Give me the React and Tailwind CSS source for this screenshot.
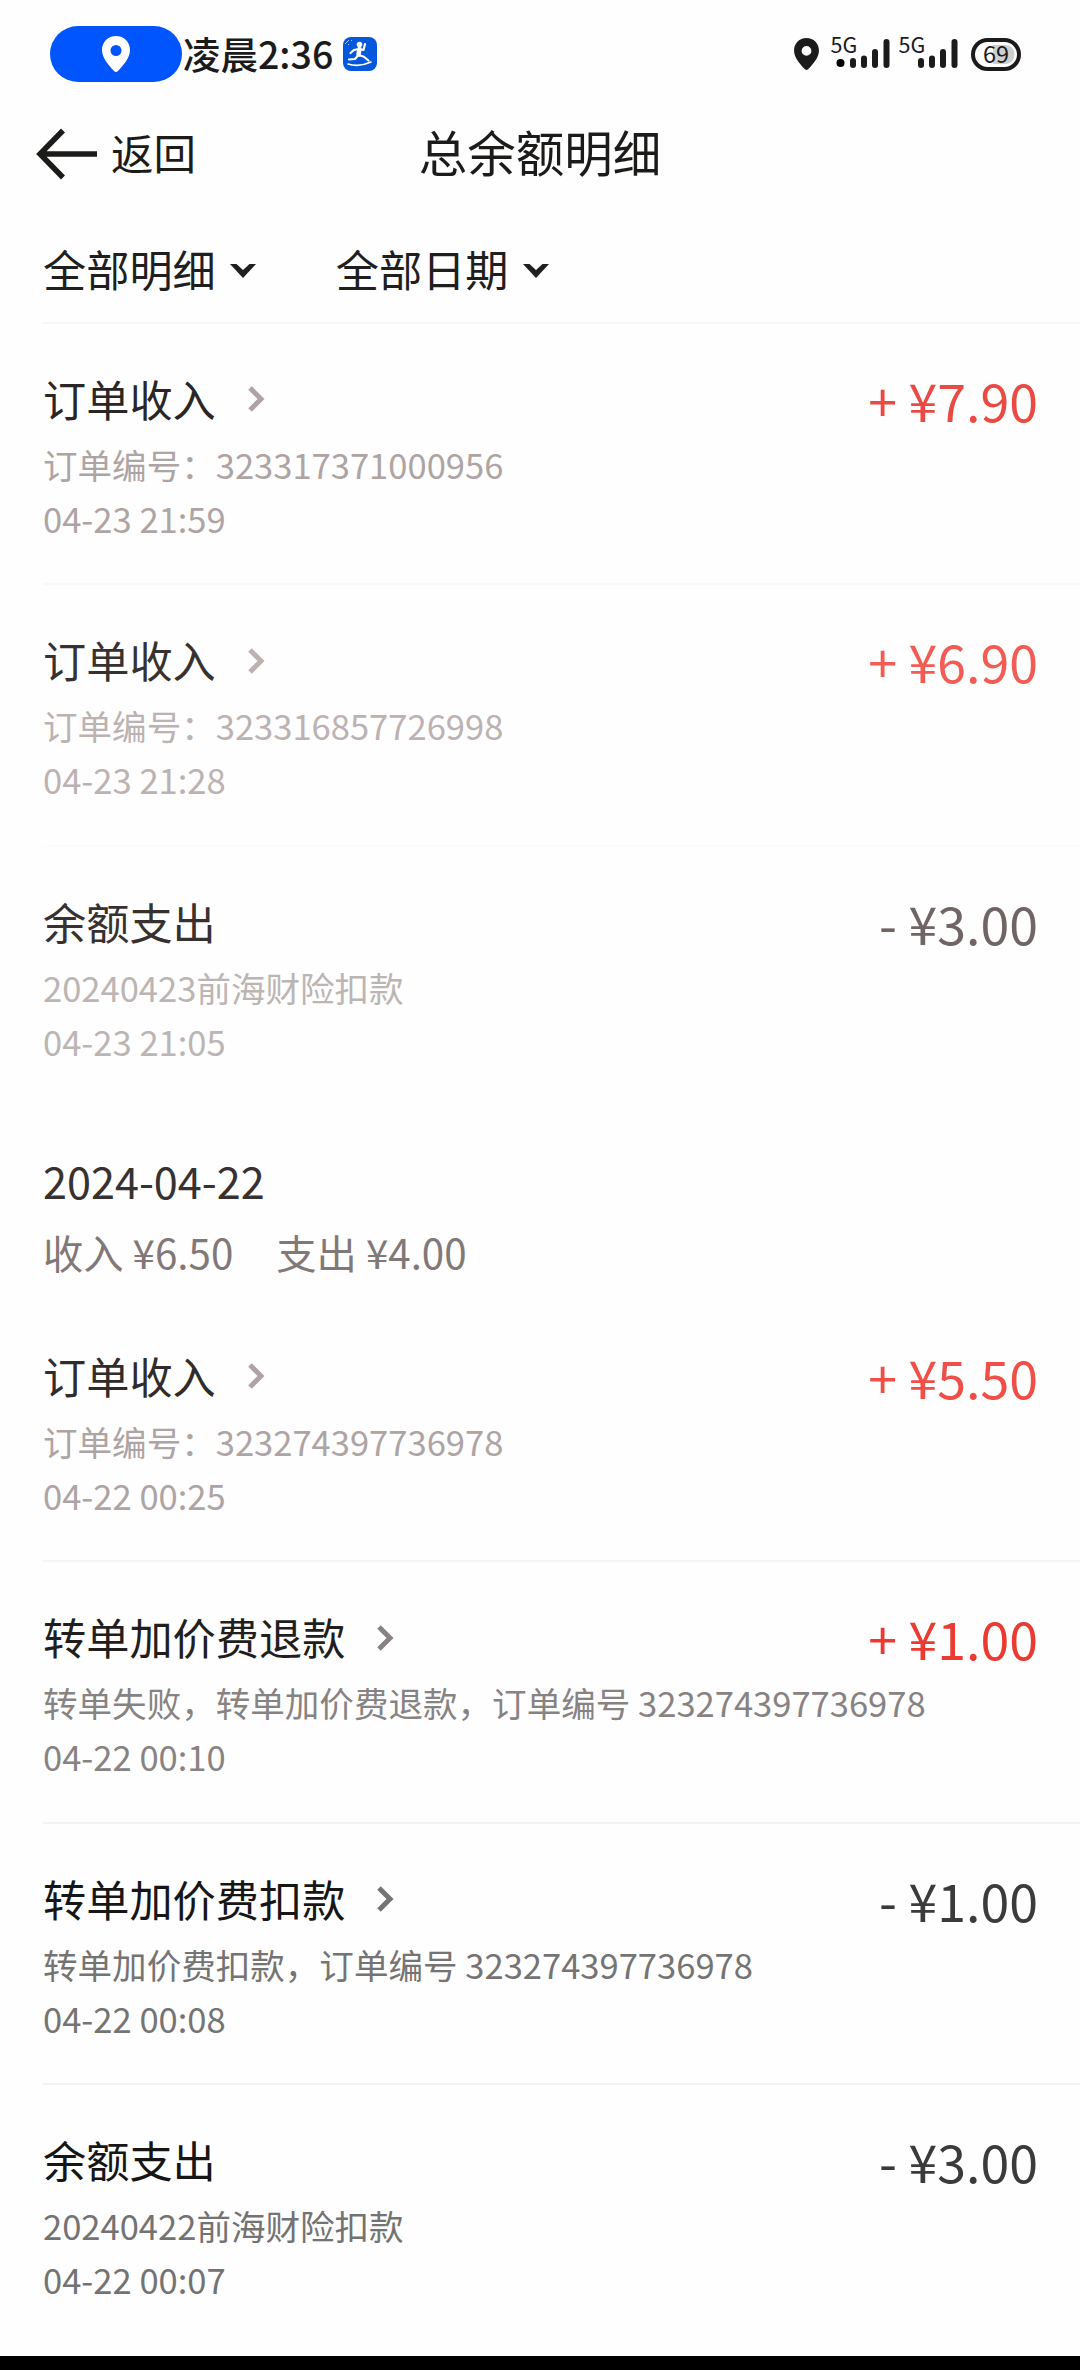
import React from 'react';

const firstDay = [
  {
    title: '订单收入',
    desc: '订单编号：323317371000956',
    time: '04-23 21:59',
    amount: '+ ¥7.90',
    link: true,
    line: 'border-[#f6f6f6]',
    titleColor: 'text-[#2a2625]',
    descColor: 'text-[#aea4a3]',
    amountColor: 'text-[#ea4a43]',
  },
  {
    title: '订单收入',
    desc: '订单编号：323316857726998',
    time: '04-23 21:28',
    amount: '+ ¥6.90',
    link: true,
    line: 'border-[#f8f8f8]',
    titleColor: 'text-[#373130]',
    descColor: 'text-[#bbb2b1]',
    amountColor: 'text-[#f25c54]',
  },
  {
    title: '余额支出',
    desc: '20240423前海财险扣款',
    time: '04-23 21:05',
    amount: '- ¥3.00',
    line: 'border-[#fcfcfc]',
    titleColor: 'text-[#373130]',
    descColor: 'text-[#bbb5b4]',
    amountColor: 'text-[#6f6564]',
  },
];

const secondDay = [
  {
    title: '订单收入',
    desc: '订单编号：323274397736978',
    time: '04-22 00:25',
    amount: '+ ¥5.50',
    link: true,
    line: 'border-transparent',
    titleColor: 'text-[#312b2a]',
    descColor: 'text-[#ada4a3]',
    amountColor: 'text-[#f04e46]',
  },
  {
    title: '转单加价费退款',
    desc: '转单失败，转单加价费退款，订单编号 323274397736978',
    time: '04-22 00:10',
    amount: '+ ¥1.00',
    link: true,
    line: 'border-[#f5f5f5]',
    titleColor: 'text-[#211e1d]',
    descColor: 'text-[#878382]',
    amountColor: 'text-[#ea3a32]',
  },
  {
    title: '转单加价费扣款',
    desc: '转单加价费扣款，订单编号 323274397736978',
    time: '04-22 00:08',
    amount: '- ¥1.00',
    link: true,
    line: 'border-[#f3f3f3]',
    titleColor: 'text-[#161616]',
    descColor: 'text-[#757473]',
    amountColor: 'text-[#3b3b3b]',
  },
  {
    title: '余额支出',
    desc: '20240422前海财险扣款',
    time: '04-22 00:07',
    amount: '- ¥3.00',
    line: 'border-[#f2f2f2]',
    titleColor: 'text-[#161616]',
    descColor: 'text-[#737373]',
    amountColor: 'text-[#3b3b3b]',
  },
];

function Pin({ className }) {
  return (
    <svg viewBox="0 0 28 36" className={className} fill="currentColor">
      <path
        fillRule="evenodd"
        d="M14 0C6 0 0 6 0 14c0 8 6.500 15 12 21q2 2 4 0c5.500-6 12-13 12-21C28 6 22 0 14 0Zm0 9a5.500 5.500 0 1 1 0 11 5.500 5.500 0 0 1 0-11Z"
      />
    </svg>
  );
}

function Signal({ dot }) {
  return (
    <svg width="61" height="54" viewBox="0 -10 61 54" fill="#1b1b1b">
      <text x="-0.500" y="15.500" fontSize="21.500">5G</text>
      {dot && <circle cx="9.500" cy="26" r="4" fill="#000" />}
      <rect x="19" y="21" width="6" height="10" rx="3" />
      <rect x="30" y="18.500" width="6" height="12.500" rx="3" />
      <rect x="41" y="12" width="6" height="19" rx="3" />
      <rect x="52.500" y="2" width="6" height="29" rx="3" />
    </svg>
  );
}

function StatusBar() {
  return (
    <div className="flex h-[108px] items-center pl-[50px] pr-[59px] text-[#1b1b1b]">
      <div className="flex h-14 w-[132px] items-center justify-center rounded-full bg-[#0055fe] text-white">
        <Pin className="h-9 w-7" />
      </div>
      <span className="-mt-[3px] ml-px text-[37.500px] leading-[54px] font-medium whitespace-nowrap">凌晨2:36</span>
      <svg width="34" height="34" viewBox="0 0 34 34" className="ml-[10px]">
        <rect width="34" height="34" rx="8" fill="#0558dc" />
        <circle cx="16.500" cy="7.500" r="2.800" fill="#fff" />
        <path
          d="M16.500 12 15.500 17.500"
          fill="none"
          stroke="#fff"
          strokeWidth="4.500"
          strokeLinecap="round"
        />
        <path
          d="M15.500 18l5 1.500 5 4M15 18.500l-3 3.500-6 .5M16 12l-5 1-3.500 3M17 12l3.500 1 1.500-6"
          fill="none"
          stroke="#fff"
          strokeWidth="2.200"
          strokeLinecap="round"
          strokeLinejoin="round"
        />
        <path d="M5 27q11 3.500 23-2" fill="none" stroke="#fff" strokeWidth="1.600" strokeLinecap="round" />
        <path d="M2 7l4-4M5 8l1-1M8 4l1-1" fill="none" stroke="#9cc4ff" strokeWidth="1" />
      </svg>
      <div className="ml-auto flex items-center">
        <Pin className="mr-3 h-8 w-[25px]" />
        <div className="mr-[7px]">
          <Signal dot />
        </div>
        <div className="mr-[11px]">
          <Signal />
        </div>
        <svg width="50" height="53" viewBox="0 -10 50 53">
          <path d="M22 7h13a8.500 9.500 0 0 1 0 19H22Z" fill="#cfcfcf" />
          <rect x="2" y="2" width="46" height="29" rx="14.500" fill="none" stroke="#1b1b1b" strokeWidth="4" />
          <text x="25" y="25" fontSize="23.500" textAnchor="middle" fill="#1b1b1b">69</text>
        </svg>
      </div>
    </div>
  );
}

function Header() {
  return (
    <div className="grid h-[92px] grid-cols-3 items-center px-9 text-[#1c1b1a]">
      <div className="flex items-center">
        <svg width="61" height="52" viewBox="0 0 61 52" fill="none" stroke="currentColor" strokeWidth="5.500">
          <path d="M27 2.500 4 26l23 23.500M4 26h57" />
        </svg>
        <span className="-mt-1 ml-[14px] text-[42.500px] leading-[60px]">返回</span>
      </div>
      <h1 className="-mt-1.5 text-center text-[48.500px] leading-[68px] whitespace-nowrap">总余额明细</h1>
    </div>
  );
}

function Filter({ label }) {
  return (
    <div className="flex items-center">
      <span className="-mt-px text-[43.2px] leading-[60px]">{label}</span>
      <svg width="26" height="14" viewBox="0 0 26 14" className="mt-1 ml-[14px]" fill="currentColor">
        <path d="M0 0h6.500L13 6 19.500 0H26L13 14Z" />
      </svg>
    </div>
  );
}

function Row({ item }) {
  return (
    <div className={`ml-[43px] flex h-[261.5px] items-start justify-between border-t-2 pt-[44px] pr-[42px] ${item.line}`}>
      <div className="whitespace-nowrap">
        <div className={`flex items-center ${item.titleColor}`}>
          <span className="text-[43.2px] leading-[60px]">{item.title}</span>
          {item.link && (
            <svg width="17" height="26" viewBox="0 0 17 26" className={`mt-[3px] ml-8 ${item.descColor}`} fill="none" stroke="currentColor" strokeWidth="5">
              <path d="M2 2l11 11L2 24" />
            </svg>
          )}
        </div>
        <div className={`mt-[9px] text-[34.56px] leading-[54px] ${item.descColor}`}>
          <p>{item.desc}</p>
          <p>{item.time}</p>
        </div>
      </div>
      <span className={`-ml-40 text-[51.84px] leading-[64px] whitespace-nowrap ${item.amountColor}`}>{item.amount}</span>
    </div>
  );
}

function App() {
  return (
    <div className="flex h-[2370px] w-[1080px] flex-col overflow-hidden bg-[#fefefe] font-['Noto_Sans_CJK_SC',sans-serif]">
      <StatusBar />
      <Header />
      <div className="flex h-[121.5px] items-center gap-20 pt-4 pl-[43px] text-[#211f1e]">
        <Filter label="全部明细" />
        <Filter label="全部日期" />
      </div>
      {firstDay.map((item) => (
        <Row key={item.time} item={item} />
      ))}
      <div className="h-[192.5px] pt-[44px] pl-[43px]">
        <h2 className="text-[43.2px] leading-[60px] text-[#373231]">2024-04-22</h2>
        <div className="mt-[15px] flex gap-[43px] text-[40.3px] leading-[54px] text-[#827877]">
          <span>收入 ¥6.50</span>
          <span>支出 ¥4.00</span>
        </div>
      </div>
      {secondDay.map((item) => (
        <Row key={item.time} item={item} />
      ))}
      <div className="mt-auto h-[14px] shrink-0 bg-black" />
    </div>
  );
}

export default App;
